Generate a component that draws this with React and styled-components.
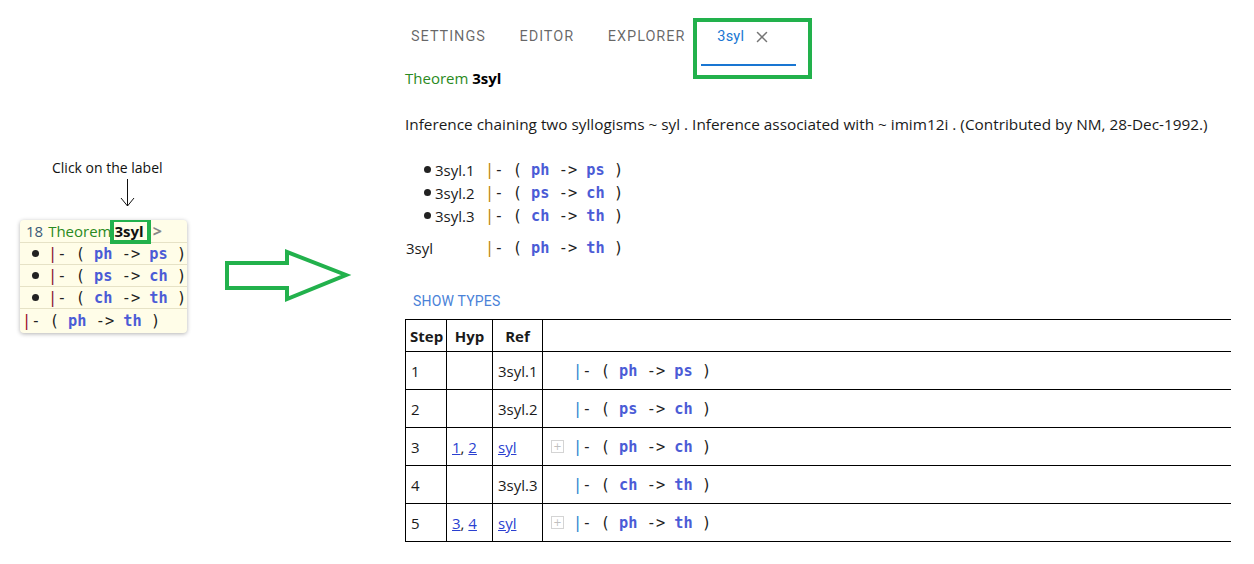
import React from 'react';
import styled, { createGlobalStyle } from 'styled-components';
import { X } from 'lucide-react';

const GlobalStyle = createGlobalStyle`
  body {
    margin: 0;
    background: #fff;
    font-family: "Open Sans", "Noto Sans", sans-serif;
    color: #1a1a1a;
  }
`;

const Page = styled.div`
  display: flex;
  width: 1254px;
  height: 564px;
  overflow: hidden;
`;

/* ---------- left annotation ---------- */

const LeftSide = styled.div`
  width: 395px;
  flex-shrink: 0;
  display: flex;
  align-items: flex-start;
  padding-top: 158px;
  box-sizing: border-box;
`;

const Callout = styled.div`
  margin-left: 20px;
  width: 167px;
  display: flex;
  flex-direction: column;
`;

const ClickLabel = styled.div`
  margin-left: 32px;
  font-size: 14px;
  line-height: 19px;
  color: #111;
  white-space: nowrap;
`;

const DownArrow = styled.svg`
  margin-left: 100px;
  margin-top: 1px;
  display: block;
`;

const Card = styled.div`
  margin-top: 12px;
  background: #fffde8;
  border-radius: 4px;
  box-shadow: 0 1px 4px rgba(0, 0, 0, 0.3);
  overflow: hidden;
`;

const CardHeader = styled.div`
  display: flex;
  align-items: center;
  height: 22px;
  padding-left: 6px;
  font-size: 15px;
  border-bottom: 1px solid #e6e2c6;
`;

const Num = styled.span`
  color: #3a5a78;
  margin-right: 5px;
`;

const Keyword = styled.span`
  color: #2a8a22;
`;

const LabelBox = styled.span`
  position: relative;
  margin-left: 3px;
  font-weight: 700;
  color: #111;
  &::after {
    content: '';
    position: absolute;
    left: -5px;
    right: -7px;
    top: -3px;
    bottom: -3px;
    border: 4px solid #22b14c;
  }
`;

const Chevron = styled.span`
  margin-left: 9px;
  color: #888;
  font-weight: 700;
  font-size: 16px;
`;

const CardRow = styled.div`
  display: flex;
  align-items: center;
  height: ${(p) => (p.$last ? '24px' : '21px')};
  padding-left: ${(p) => (p.$hyp ? '12px' : '2px')};
  border-bottom: ${(p) => (p.$last ? 'none' : '1px solid #e6e2c6')};
`;

const Dot = styled.span`
  width: 7px;
  height: 7px;
  border-radius: 50%;
  background: #222;
  margin-right: ${(p) => p.$gap || 8}px;
  flex-shrink: 0;
`;

const BigArrow = styled.svg`
  margin-left: 38px;
  margin-top: 91px;
  display: block;
`;

/* ---------- right panel ---------- */

const RightSide = styled.div`
  flex: 1;
  display: flex;
  flex-direction: column;
`;

const Tabs = styled.div`
  display: flex;
  margin-top: 16px;
  height: 50px;
`;

const Tab = styled.div`
  position: relative;
  display: flex;
  justify-content: ${(p) => (p.$active ? 'flex-start' : 'center')};
  align-items: flex-start;
  gap: 9px;
  min-width: ${(p) => (p.$active ? '95px' : '90px')};
  padding: 12px 16px 0;
  box-sizing: border-box;
  font-family: Roboto, sans-serif;
  font-size: 14.5px;
  line-height: 18px;
  letter-spacing: ${(p) => (p.$active ? '0.2px' : '0.95px')};
  text-transform: ${(p) => (p.$active ? 'none' : 'uppercase')};
  color: ${(p) => (p.$active ? '#1976d2' : 'rgba(0, 0, 0, 0.6)')};
  border-bottom: 2px solid ${(p) => (p.$active ? '#1976d2' : 'transparent')};
  ${(p) => p.$active && `
    &::after {
      content: '';
      position: absolute;
      left: -8px;
      right: -16px;
      top: 2px;
      bottom: -15px;
      border: 4px solid #22b14c;
    }
  `}
`;

const Content = styled.div`
  padding-left: 10px;
  display: flex;
  flex-direction: column;
`;

const Heading = styled.div`
  margin-top: 2px;
  font-size: 15px;
  line-height: 20px;
  b {
    color: #000;
  }
`;

const Description = styled.div`
  margin-top: 26px;
  font-size: 15.35px;
  line-height: 20px;
  white-space: nowrap;
`;

const Assertions = styled.div`
  margin-top: 24px;
  display: grid;
  grid-template-columns: 80px auto;
  font-size: 15px;
`;

const AssertLabel = styled.div`
  display: flex;
  align-items: center;
  height: 23px;
  padding-left: ${(p) => (p.$hyp ? '19px' : '1px')};
  margin-top: ${(p) => (p.$conclusion ? '9px' : '0')};
`;

const AssertExpr = styled.div`
  display: flex;
  align-items: center;
  height: 23px;
  margin-top: ${(p) => (p.$conclusion ? '9px' : '0')};
`;

const ShowTypes = styled.div`
  margin-top: 33px;
  padding-left: 8px;
  font-family: Roboto, sans-serif;
  font-size: 14px;
  line-height: 18px;
  color: #4a82d8;
  letter-spacing: 0.2px;
`;

const ProofTable = styled.table`
  margin-top: 9px;
  width: 826px;
  table-layout: fixed;
  border-collapse: collapse;
  font-size: 15px;
  th, td {
    border: 1px solid #000;
    padding: 0 5px;
    text-align: left;
    white-space: nowrap;
    overflow: hidden;
  }
  th:last-child, td:last-child {
    border-right: none;
  }
  th {
    height: 31px;
    font-weight: 700;
    text-align: center;
  }
  th:first-child {
    text-align: left;
    padding: 0 3px 0 4px;
  }
  td {
    height: 37px;
  }
`;

const Link = styled.a`
  color: #2a3fd0;
  text-decoration: underline;
`;

const ExprCell = styled.div`
  display: flex;
  align-items: center;
  padding-left: 3px;
`;

const PlusBox = styled.span`
  width: 11px;
  height: 11px;
  border: 1px solid #d4d4d4;
  margin-right: 9px;
  display: flex;
  align-items: center;
  justify-content: center;
  font-size: 10px;
  line-height: 1;
  color: #c0c0c0;
  font-family: "DejaVu Sans", sans-serif;
  visibility: ${(p) => (p.$hidden ? 'hidden' : 'visible')};
`;

/* ---------- expressions ---------- */

const Mono = styled.span`
  font-family: "DejaVu Sans Mono", "Liberation Mono", monospace;
  font-size: 15.3px;
  white-space: pre;
  color: #222;
`;

const Bar = styled.span`
  color: ${(p) => p.$color};
`;

const Var = styled.span`
  color: #4b5cd6;
  font-weight: 700;
`;

const Expr = ({ from, to, bar }) => (
  <Mono>
    <Bar $color={bar}>|</Bar>- ( <Var>{from}</Var> -&gt; <Var>{to}</Var> )
  </Mono>
);

const hyps = [
  ['3syl.1', 'ph', 'ps'],
  ['3syl.2', 'ps', 'ch'],
  ['3syl.3', 'ch', 'th'],
];

const steps = [
  { step: 1, hyp: null, ref: '3syl.1', from: 'ph', to: 'ps' },
  { step: 2, hyp: null, ref: '3syl.2', from: 'ps', to: 'ch' },
  { step: 3, hyp: [1, 2], ref: 'syl', from: 'ph', to: 'ch' },
  { step: 4, hyp: null, ref: '3syl.3', from: 'ch', to: 'th' },
  { step: 5, hyp: [3, 4], ref: 'syl', from: 'ph', to: 'th' },
];

const App = () => (
  <Page>
    <GlobalStyle />
    <LeftSide>
      <Callout>
        <ClickLabel>Click on the label</ClickLabel>
        <DownArrow width="16" height="30" viewBox="0 0 16 30">
          <path d="M7.5 1 V28 M1 20 L7.5 28 L14 20" fill="none" stroke="#111" strokeWidth="1" />
        </DownArrow>
        <Card>
          <CardHeader>
            <Num>18</Num>
            <Keyword>Theorem</Keyword>
            <LabelBox>3syl</LabelBox>
            <Chevron>&gt;</Chevron>
          </CardHeader>
          {hyps.map(([label, from, to]) => (
            <CardRow key={label} $hyp>
              <Dot $gap={9} />
              <Expr from={from} to={to} bar="#8b1a3a" />
            </CardRow>
          ))}
          <CardRow $last>
            <Expr from="ph" to="th" bar="#9b1030" />
          </CardRow>
        </Card>
      </Callout>
      <BigArrow width="128" height="56" viewBox="0 0 128 56">
        <path
          d="M2 14 H62 V3 L121 26 L62 50 V39 H2 Z"
          fill="none"
          stroke="#22b14c"
          strokeWidth="4"
          strokeLinejoin="miter"
        />
      </BigArrow>
    </LeftSide>

    <RightSide>
      <Tabs>
        <Tab>Settings</Tab>
        <Tab>Editor</Tab>
        <Tab>Explorer</Tab>
        <Tab $active>
          3syl
          <X size={18} color="#757575" strokeWidth={2} />
        </Tab>
      </Tabs>
      <Content>
        <Heading>
          <Keyword>Theorem</Keyword> <b>3syl</b>
        </Heading>
        <Description>
          Inference chaining two syllogisms ~ syl . Inference associated with ~ imim12i . (Contributed by NM, 28-Dec-1992.)
        </Description>
        <Assertions>
          {hyps.map(([label, from, to]) => (
            <React.Fragment key={label}>
              <AssertLabel $hyp>
                <Dot $gap={4} />
                {label}
              </AssertLabel>
              <AssertExpr>
                <Expr from={from} to={to} bar="#c08a10" />
              </AssertExpr>
            </React.Fragment>
          ))}
          <AssertLabel $conclusion>3syl</AssertLabel>
          <AssertExpr $conclusion>
            <Expr from="ph" to="th" bar="#c08a10" />
          </AssertExpr>
        </Assertions>
        <ShowTypes>SHOW TYPES</ShowTypes>
        <ProofTable>
          <colgroup>
            <col style={{ width: 41 }} />
            <col style={{ width: 46 }} />
            <col style={{ width: 50 }} />
            <col />
          </colgroup>
          <thead>
            <tr>
              <th>Step</th>
              <th>Hyp</th>
              <th>Ref</th>
              <th />
            </tr>
          </thead>
          <tbody>
            {steps.map((s) => (
              <tr key={s.step}>
                <td>{s.step}</td>
                <td>
                  {s.hyp && (
                    <>
                      <Link>{s.hyp[0]}</Link>, <Link>{s.hyp[1]}</Link>
                    </>
                  )}
                </td>
                <td>{s.hyp ? <Link>{s.ref}</Link> : s.ref}</td>
                <td>
                  <ExprCell>
                    <PlusBox $hidden={!s.hyp}>+</PlusBox>
                    <Expr from={s.from} to={s.to} bar="#2f86d0" />
                  </ExprCell>
                </td>
              </tr>
            ))}
          </tbody>
        </ProofTable>
      </Content>
    </RightSide>
  </Page>
);

export default App;
